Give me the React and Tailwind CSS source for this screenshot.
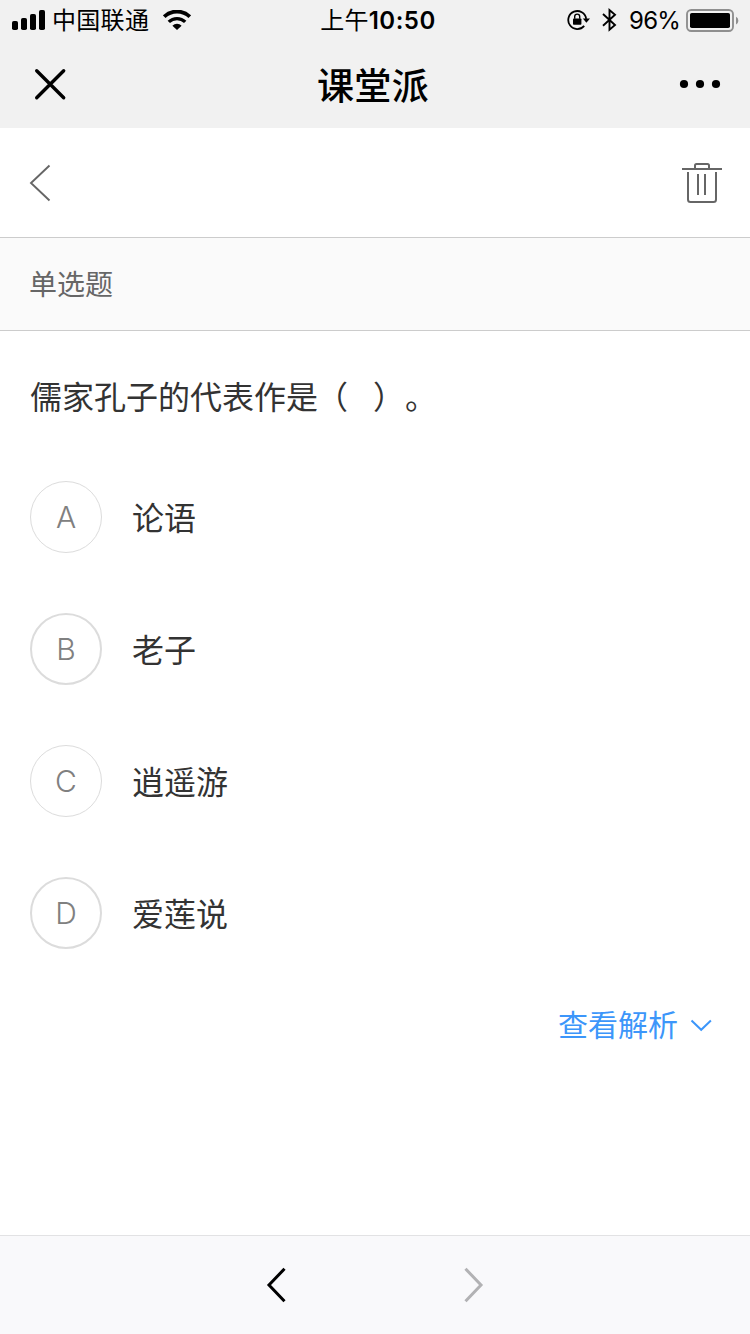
import React from "react";

const OPTIONS = [
  { key: "A", label: "论语", ring: "border" },
  { key: "B", label: "老子", ring: "border-2" },
  { key: "C", label: "逍遥游", ring: "border" },
  { key: "D", label: "爱莲说", ring: "border-2" },
];

function SignalIcon() {
  return (
    <svg width="34" height="20" viewBox="0 0 34 20">
      <rect x="0" y="11" width="6" height="9" rx="1.8" />
      <rect x="9" y="8" width="6" height="12" rx="1.8" />
      <rect x="18" y="4" width="6" height="16" rx="1.8" />
      <rect x="27" y="0" width="6" height="20" rx="1.8" />
    </svg>
  );
}

function WifiIcon() {
  return (
    <svg width="28" height="20" viewBox="0 0 28 20" fill="none" stroke="#000">
      <path d="M1.2 6.7a18.4 18.4 0 0 1 25.6 0" strokeWidth="3.8" />
      <path d="M5.8 11.9a11.8 11.8 0 0 1 16.4 0" strokeWidth="3.4" />
      <path d="M14 20l-4.6-4.3a6.4 6.4 0 0 1 9.2 0z" fill="#000" stroke="none" />
    </svg>
  );
}

function RotationLockIcon() {
  return (
    <svg width="24" height="22" viewBox="0 0 24 22" fill="none" stroke="#000" strokeWidth="1.8">
      <path d="M17.2 16.8A9 9 0 1 1 19.2 9.8" />
      <path d="M15.8 9.4h7.2l-3.6 4.3z" fill="#000" stroke="none" />
      <rect x="6" y="9.4" width="8.4" height="6.4" rx="0.8" fill="#000" stroke="none" />
      <path d="M7.7 9.8V7.6a2.5 2.5 0 0 1 5 0v2.2" strokeWidth="1.4" />
    </svg>
  );
}

function BluetoothIcon() {
  return (
    <svg width="15" height="24" viewBox="0 0 15 24" fill="none" stroke="#000" strokeWidth="1.9">
      <path d="M1 6L13 17 7.5 21.7V2.1L13 6.8 1 17.8" />
    </svg>
  );
}

function BatteryIcon() {
  return (
    <svg width="54" height="24" viewBox="0 0 54 24">
      <rect x="1" y="2" width="46" height="21" rx="4.2" fill="none" stroke="#8f8f8f" strokeWidth="1.9" />
      <rect x="4" y="5" width="40" height="15" rx="1.8" />
      <path d="M50 8.8a4.4 4.4 0 0 1 0 7.8z" fill="#8f8f8f" />
    </svg>
  );
}

function TrashIcon() {
  return (
    <svg width="40" height="42" viewBox="0 0 40 42" fill="none" stroke="#666" strokeWidth="2">
      <path d="M0 7h40" />
      <path d="M13 7V3.5Q13 2 14.5 2h11Q27 2 27 3.5V7" />
      <path d="M6 10v27.5q0 2.5 2.5 2.5h23q2.5 0 2.5-2.5V10" />
      <path d="M16 12v21M23 12v21" />
    </svg>
  );
}

function StatusBar() {
  return (
    <div className="h-10 px-3 grid grid-cols-[1fr_auto_1fr] items-center text-[24px] leading-10">
      <div className="flex items-center">
        <SignalIcon />
        <span className="ml-[6px] pt-[2px] leading-[38px] tracking-[0.3px]">中国联通</span>
        <div className="ml-[14px]">
          <WifiIcon />
        </div>
      </div>
      <div className="flex items-center pl-[6px] pt-[2px] leading-[38px]">
        <span className="tracking-[0.2px]">上午</span>
        <span className="font-semibold tracking-[0.5px]">10:50</span>
      </div>
      <div className="flex items-center justify-end -mr-[2px]">
        <RotationLockIcon />
        <div className="ml-[11px]">
          <BluetoothIcon />
        </div>
        <span className="ml-[12px] mr-[6px] pt-[2px] leading-[38px] tracking-[-0.8px]">96%</span>
        <BatteryIcon />
      </div>
    </div>
  );
}

function TitleBar() {
  return (
    <div className="h-[88px] px-[29px] flex items-center justify-between">
      <svg width="42" height="42" viewBox="0 0 42 42" fill="none" stroke="#000" strokeWidth="3.4" strokeLinecap="round">
        <path d="M7.7 7.7l27 27M34.7 7.7l-27 27" />
      </svg>
      <h1 className="pt-[5px] pr-[4px] text-[37px] leading-[54px] font-medium tracking-[0.3px]">课堂派</h1>
      <svg width="42" height="10" viewBox="0 0 42 10">
        <circle cx="5" cy="5" r="4.1" />
        <circle cx="21" cy="5" r="4.1" />
        <circle cx="37" cy="5" r="4.1" />
      </svg>
    </div>
  );
}

export default function App() {
  return (
    <div className="w-[750px] h-[1334px] flex flex-col bg-white text-black font-['Inter','Noto_Sans_CJK_SC',sans-serif]">
      <header className="bg-[#f1f1f1]">
        <StatusBar />
        <TitleBar />
      </header>

      {/* Toolbar */}
      <div className="h-[110px] px-7 flex items-center justify-between border-b border-[#ccc]">
        <button>
          <svg width="24" height="38" viewBox="0 0 24 38" fill="none" stroke="#666" strokeWidth="1.9">
            <path d="M21.5 1.5L3 19l18.5 17.5" />
          </svg>
        </button>
        <button>
          <TrashIcon />
        </button>
      </div>

      {/* Question type */}
      <div className="h-[93px] px-[29px] pt-[2px] flex items-center bg-[#fafafa] border-b border-[#ccc] text-[28px] text-[#666]">
        单选题
      </div>

      <main className="flex-1 px-[30px] text-[#333]">
        <p className="pt-[43px] text-[32px] leading-[48px] whitespace-pre [text-spacing-trim:space-all]">
          儒家孔子的代表作是<span className="-ml-[2px]">（</span>
          <span className="inline-block w-[25px]"> </span>）。
        </p>

        <ul className="mt-[59px] flex flex-col gap-[60px]">
          {OPTIONS.map((o) => (
            <li key={o.key} className="h-[72px] flex items-center gap-[30px]">
              <span
                className={`w-[72px] h-[72px] rounded-full border-[#dcdcdc] flex items-center justify-center text-[30px] font-[350] text-[#808080] ${o.ring}`}
              >
                {o.key}
              </span>
              <span className="pt-[3px] text-[32px] leading-[48px]">{o.label}</span>
            </li>
          ))}
        </ul>

        <button className="mt-[52px] mr-[8px] ml-auto flex items-center gap-[12px] text-[30px] leading-[48px] text-[#3c96fa]">
          查看解析
          <svg width="22" height="14" viewBox="0 0 22 14" fill="none" stroke="currentColor" strokeWidth="2">
            <path d="M1.5 2.5l9.7 9.3 9.7-9.3" />
          </svg>
        </button>
      </main>

      {/* Browser navigation */}
      <footer className="h-[99px] border-t border-[#e2e2e4] bg-[#f9f9fb] flex items-center justify-center gap-[178px]">
        <svg width="20" height="36" viewBox="0 0 20 36" fill="none" stroke="#000" strokeWidth="3">
          <path d="M18.5 1.8L3 18l15.5 16.2" />
        </svg>
        <svg width="20" height="36" viewBox="0 0 20 36" fill="none" stroke="#b2b2b4" strokeWidth="3">
          <path d="M1.5 1.8L17 18 1.5 34.2" />
        </svg>
      </footer>
    </div>
  );
}
